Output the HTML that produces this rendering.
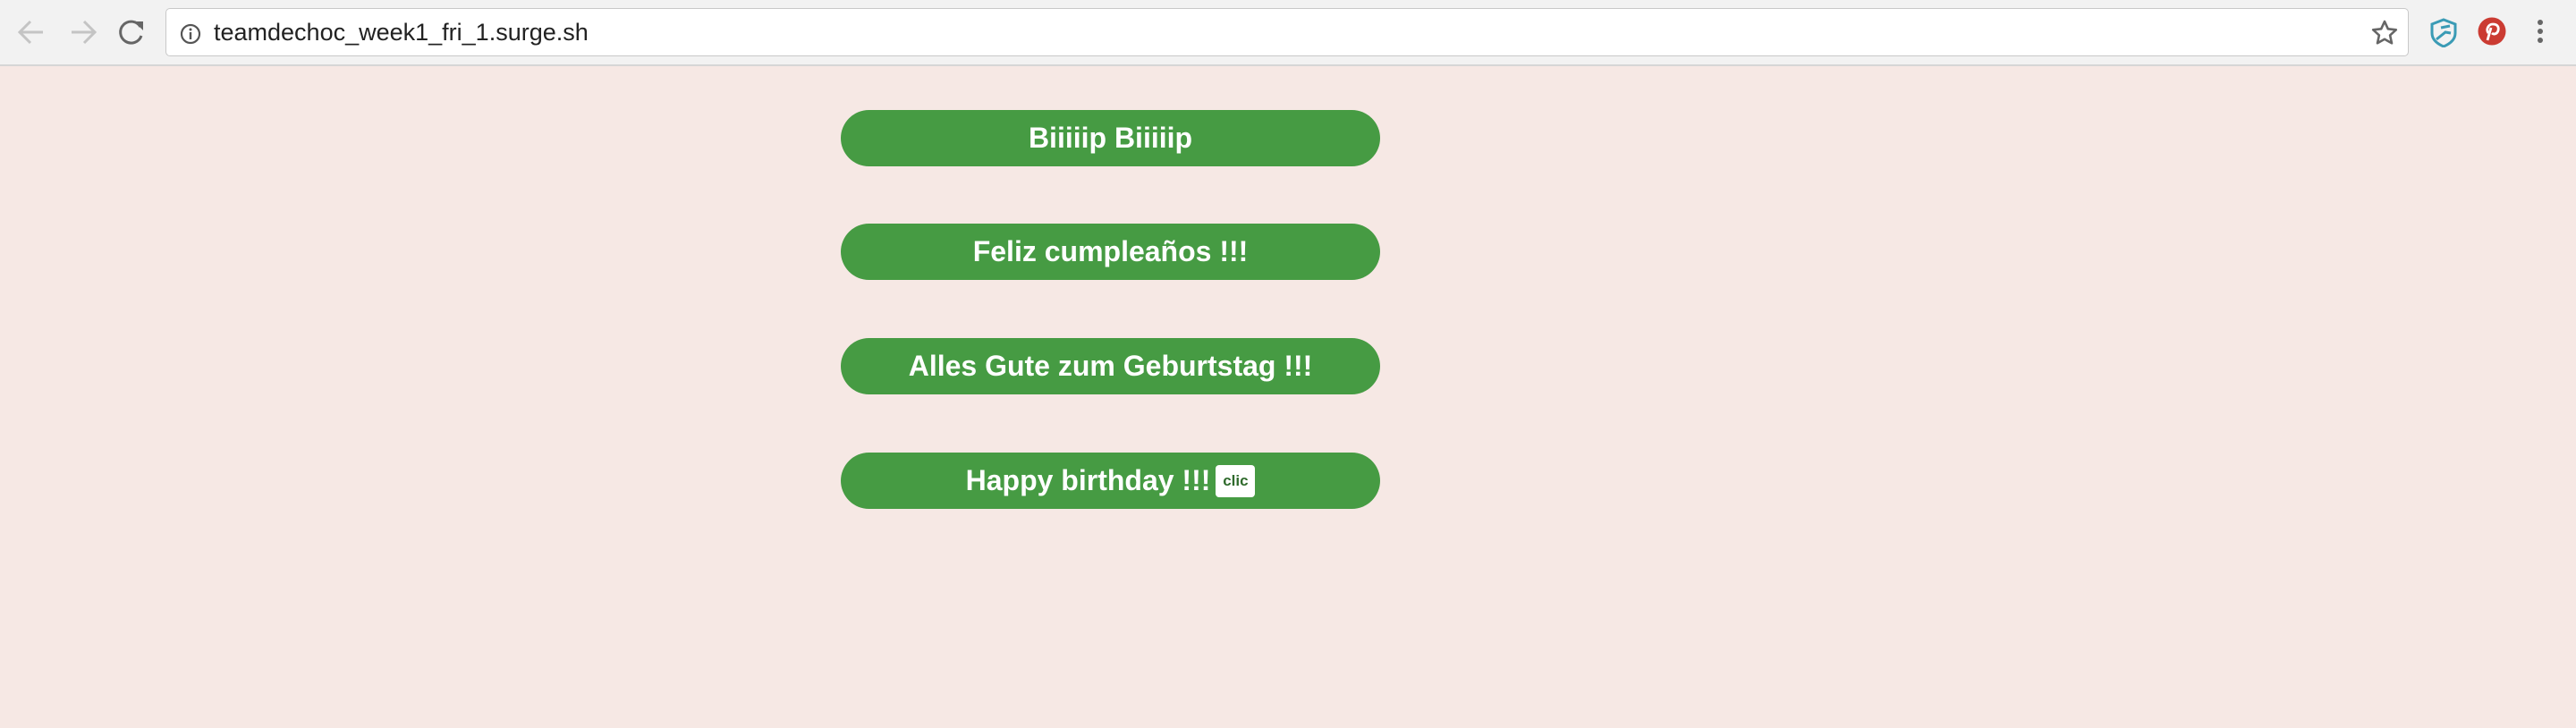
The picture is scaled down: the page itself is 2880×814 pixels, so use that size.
<!DOCTYPE html>
<html><head><meta charset="utf-8"><style>
*{margin:0;padding:0;box-sizing:border-box}
body{width:2880px;height:814px;background:#f6e8e4;position:relative;overflow:hidden;font-family:"Liberation Sans",Arial,sans-serif}
.bar{position:absolute;left:0;top:0;width:2880px;height:74px;background:#f2f2f2;border-bottom:2px solid #d6d6d6}
.url{position:absolute;left:185px;top:9px;width:2508px;height:54px;background:#fff;border:1px solid #c8c8c8;border-radius:5px}
.url span{position:absolute;left:53px;top:11px;font-size:27px;color:#222}
.btn{position:absolute;left:940px;width:603px;height:63px;background:#469b43;border-radius:32px;color:#fff;font-weight:bold;font-size:32px;text-align:center;line-height:63px}
.clic{display:inline-block;background:#fff;color:#2f6a2c;font-size:17px;line-height:36px;height:36px;width:44px;border-radius:4px;vertical-align:middle;margin-left:6px;position:relative;top:-2px}
</style></head><body>
<div class="bar">
<svg style="position:absolute;left:0;top:0" width="180" height="73">
<g fill="none" stroke="#c4c4c4" stroke-width="3"><path d="M22 36h26M34 24l-12 12 12 12"/><path d="M80 36h26M94 24l12 12-12 12"/></g>
<path d="M157 30a12 12 0 1 0 1 10" fill="none" stroke="#666" stroke-width="3"/><path d="M150 24h10v10z" fill="#666"/>
</svg>
<div class="url">
<svg style="position:absolute;left:15px;top:16px" width="24" height="24"><circle cx="12" cy="12" r="10" fill="none" stroke="#555" stroke-width="2.2"/><rect x="10.8" y="10" width="2.4" height="8" fill="#555"/><circle cx="12" cy="7" r="1.5" fill="#555"/></svg>
<span>teamdechoc_week1_fri_1.surge.sh</span>
<svg style="position:absolute;left:2464px;top:11px" width="32" height="30"><path d="M16 3l3.8 8.3 9 1-6.7 6.1 1.9 8.9L16 22.8l-8 4.5 1.9-8.9L3.2 12.3l9-1z" fill="none" stroke="#666" stroke-width="2.6" stroke-linejoin="round"/></svg>
</div>
<svg style="position:absolute;left:2715px;top:19px" width="34" height="34"><path d="M17 3l13 5v10c0 7-6 12-13 15C10 30 4 25 4 18V8z" fill="none" stroke="#3a9bb5" stroke-width="3"/><path d="M9 25l10-8 6 1M14 12l10-2" stroke="#3a9bb5" stroke-width="3" fill="none"/></svg>
<svg style="position:absolute;left:2770px;top:19px" width="32" height="32"><circle cx="16" cy="16" r="15.5" fill="#cb3b32"/><path d="M11 26l4-14M12 18c-3-4 0-10 5-10 5 0 7 3 6 7-1 4-5 5-7 3" fill="none" stroke="#fff" stroke-width="2.8"/></svg>
<svg style="position:absolute;left:2835px;top:21px" width="10" height="30"><circle cx="5" cy="4" r="3" fill="#666"/><circle cx="5" cy="14" r="3" fill="#666"/><circle cx="5" cy="24" r="3" fill="#666"/></svg>
</div>
<div class="btn" style="top:123px">Biiiiip Biiiiip</div>
<div class="btn" style="top:250px">Feliz cumpleaños !!!</div>
<div class="btn" style="top:378px">Alles Gute zum Geburtstag !!!</div>
<div class="btn" style="top:506px">Happy birthday !!!<span class="clic">clic</span></div>
</body></html>
